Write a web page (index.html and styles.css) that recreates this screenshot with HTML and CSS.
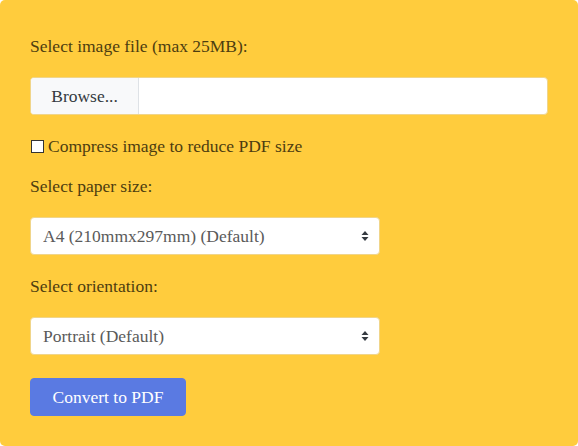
FILE: index.html
```html
<!DOCTYPE html>
<html>
<head>
<meta charset="utf-8">
<link rel="stylesheet" href="styles.css">
</head>
<body>
<form class="card">
  <label class="label">Select image file (max 25MB):</label>
  <div class="file">
    <span class="file-btn">Browse...</span>
    <span class="file-name"></span>
  </div>
  <label class="check-row"><input type="checkbox" class="check">Compress image to reduce PDF size</label>
  <label class="label label-gap">Select paper size:</label>
  <div class="select-wrap">
    <select class="select"><option>A4 (210mmx297mm) (Default)</option></select>
    <svg class="arrows" width="8" height="12" viewBox="0 0 8 12"><path d="M4 1 L7.5 5 H0.5 Z M4 11 L7.5 7 H0.5 Z" fill="#343a40"/></svg>
  </div>
  <label class="label label-gap2">Select orientation:</label>
  <div class="select-wrap">
    <select class="select"><option>Portrait (Default)</option></select>
    <svg class="arrows" width="8" height="12" viewBox="0 0 8 12"><path d="M4 1 L7.5 5 H0.5 Z M4 11 L7.5 7 H0.5 Z" fill="#343a40"/></svg>
  </div>
  <button type="button" class="submit">Convert to PDF</button>
</form>
</body>
</html>
```
FILE: styles.css
```css
html, body {
  margin: 0;
  padding: 0;
  background: #ffffff;
}
body {
  font-family: "Liberation Serif", "DejaVu Serif", serif;
  font-size: 17.5px;
}
.card {
  box-sizing: border-box;
  width: 578px;
  height: 446px;
  background: #ffcc3d;
  border-radius: 5px;
  padding: 34px 30px 30px;
  display: flex;
  flex-direction: column;
  align-items: flex-start;
}
.label {
  display: block;
  line-height: 24px;
  color: #4d3d10;
}
.file {
  margin-top: 19px;
  width: 518px;
  height: 38px;
  box-sizing: border-box;
  display: flex;
  background: #fff;
  border: 1px solid #f0d58a;
  border-radius: 4px;
  overflow: hidden;
}
.file-btn {
  width: 107px;
  background: #f8f9fa;
  border-right: 1px solid #dee2e6;
  color: #343a40;
  line-height: 36px;
  text-align: center;
}
.file-name { flex: 1; }
.check-row {
  margin-top: 19px;
  line-height: 24px;
  color: #4d3d10;
  display: flex;
  align-items: center;
}
.check {
  appearance: none;
  -webkit-appearance: none;
  width: 13px;
  height: 13px;
  margin: 0 4px 0 1px;
  box-sizing: border-box;
  border: 1px solid #333;
  background: #fff;
}
.label-gap { margin-top: 16px; }
.label-gap2 { margin-top: 19px; }
.select-wrap {
  position: relative;
  margin-top: 19px;
  width: 350px;
  height: 38px;
}
.select {
  appearance: none;
  -webkit-appearance: none;
  width: 100%;
  height: 100%;
  box-sizing: border-box;
  border: 1px solid #f0d58a;
  border-radius: 4px;
  background: #fff;
  padding: 0 12px;
  font-family: inherit;
  font-size: 17.5px;
  color: #5a5a5a;
}
.arrows {
  position: absolute;
  right: 11px;
  top: 13px;
  pointer-events: none;
}
.submit {
  margin-top: 23px;
  width: 156px;
  height: 38px;
  padding: 0;
  background: #5a7ae2;
  color: #fff;
  border: 1px solid #5a7ae2;
  border-radius: 4px;
  font-family: inherit;
  font-size: 17.5px;
}
```
